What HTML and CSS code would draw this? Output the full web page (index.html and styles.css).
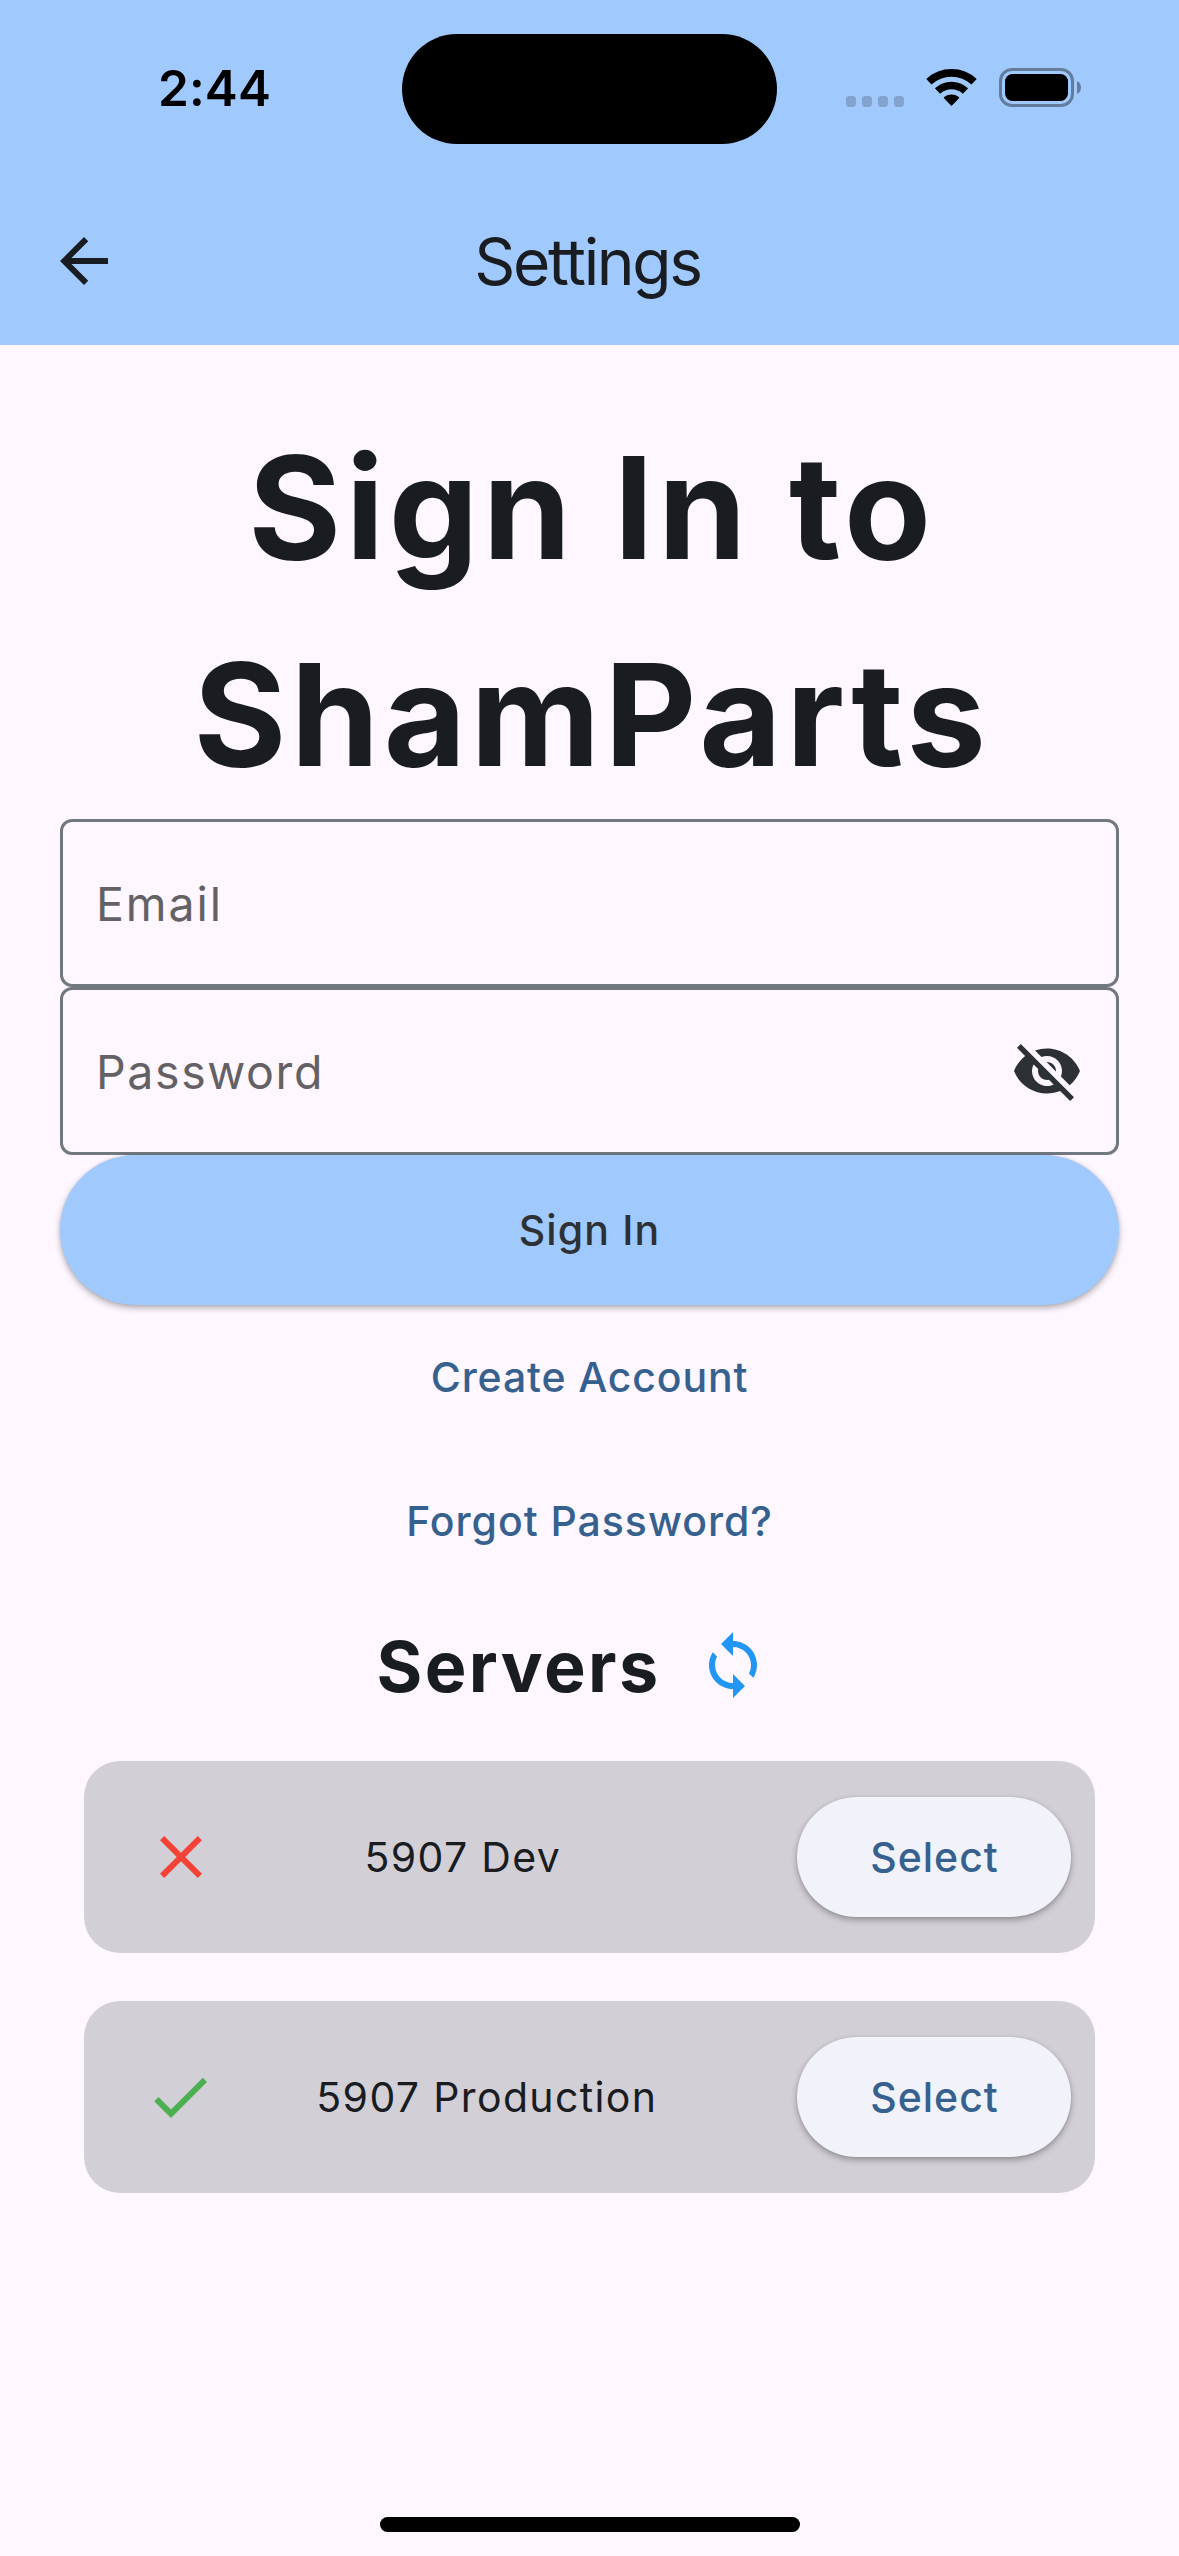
FILE: index.html
```html
<!DOCTYPE html>
<html lang="en">
<head>
  <meta charset="utf-8">
  <meta name="viewport" content="width=device-width">
  <title>Settings</title>
  <link rel="stylesheet" href="styles.css">
</head>
<body>
  <div class="screen">
    <header class="header">
      <div class="status-bar">
        <span class="time">2:44</span>
        <div class="island"></div>
        <div class="status-icons">
          <div class="signal"><i></i><i></i><i></i><i></i></div>
          <svg class="wifi" viewBox="0 0 52 38" aria-hidden="true">
            <path d="M2.9 12.8A33.1 33.1 0 0 1 48.1 12.8M11.5 22A20.5 20.5 0 0 1 39.5 22" fill="none" stroke="#000" stroke-width="7.6"/>
            <path d="M18 29.2Q17.4 28.5 18.2 27.9A12 12 0 0 1 32.8 27.9Q33.6 28.5 33 29.2L25.5 37Z"/>
          </svg>
          <svg class="battery" viewBox="0 0 82 39" aria-hidden="true">
            <rect x="1.5" y="1.5" width="72" height="36" rx="11.5" fill="none" stroke="#647c9c" stroke-width="3"/>
            <rect x="6" y="6" width="63" height="27" rx="7.5"/>
            <path d="M78 13Q82 15 82 19.5T78 26Z" fill="#647c9c"/>
          </svg>
        </div>
      </div>
      <div class="app-bar">
        <svg class="icon" viewBox="0 0 24 24" aria-label="Back"><path d="M20 11H7.83l5.59-5.59L12 4l-8 8 8 8 1.41-1.41L7.83 13H20v-2z"/></svg>
        <h1 class="title">Settings</h1>
      </div>
    </header>

    <main class="content">
      <h2 class="headline">Sign In to<br>ShamParts</h2>
      <div class="field"><span class="label-email">Email</span></div>
      <div class="field">
        <span>Password</span>
        <svg class="icon" viewBox="0 0 24 24" aria-label="Show password"><path d="M12 7c2.76 0 5 2.24 5 5 0 .65-.13 1.26-.36 1.83l2.92 2.92c1.51-1.26 2.7-2.89 3.43-4.75-1.73-4.39-6-7.5-11-7.5-1.4 0-2.74.25-3.98.7l2.16 2.16C10.74 7.13 11.35 7 12 7zM2 4.27l2.28 2.28.46.46C3.08 8.3 1.78 10.02 1 12c1.73 4.39 6 7.5 11 7.5 1.55 0 3.03-.3 4.38-.84l.42.42L19.73 22 21 20.73 3.27 3 2 4.27zM7.53 9.8l1.55 1.55c-.05.21-.08.43-.08.65 0 1.66 1.34 3 3 3 .22 0 .44-.03.65-.08l1.55 1.55c-.67.33-1.41.53-2.2.53-2.76 0-5-2.24-5-5 0-.79.2-1.53.53-2.2zm4.31-.78l3.15 3.15.02-.16c0-1.66-1.34-3-3-3l-.17.01z"/></svg>
      </div>
      <button class="button sign-in">Sign In</button>
      <a class="link">Create Account</a>
      <a class="link forgot">Forgot Password?</a>

      <div class="servers-heading">
        <h3>Servers</h3>
        <svg class="icon sync" viewBox="0 0 24 24" aria-label="Refresh"><path d="M12 4V1L8 5l4 4V6c3.31 0 6 2.69 6 6 0 1.01-.25 1.97-.7 2.8l1.46 1.46C19.54 15.03 20 13.57 20 12c0-4.42-3.58-8-8-8zm0 14c-3.31 0-6-2.69-6-6 0-1.01.25-1.97.7-2.8L5.24 7.74C4.46 8.97 4 10.43 4 12c0 4.42 3.58 8 8 8v3l4-4-4-4v3z"/></svg>
      </div>

      <div class="servers">
        <div class="server">
          <svg class="icon offline" viewBox="0 0 24 24" aria-label="Offline"><path d="M19 6.41L17.59 5 12 10.59 6.41 5 5 6.41 10.59 12 5 17.59 6.41 19 12 13.41 17.59 19 19 17.59 13.41 12z"/></svg>
          <div class="server-name"><span>5907 Dev</span></div>
          <button class="button select">Select</button>
        </div>
        <div class="server">
          <svg class="icon online" viewBox="0 0 24 24" aria-label="Online"><path d="M9 16.17L4.83 12l-1.42 1.41L9 19 21 7l-1.41-1.41z"/></svg>
          <div class="server-name"><span>5907 Production</span></div>
          <button class="button select">Select</button>
        </div>
      </div>
    </main>

    <footer class="home"><div class="home-indicator"></div></footer>
  </div>
</body>
</html>
```
FILE: styles.css
```css
* {
  box-sizing: border-box;
}

body {
  margin: 0;
  background: #fef7ff;
  color: #191c20;
  font-family: Inter, "Liberation Sans", sans-serif;
}

h1, h2, h3 {
  margin: 0;
}

.screen {
  display: flex;
  flex-direction: column;
  width: 1179px;
  height: 2556px;
}

.icon {
  flex: none;
  width: 72px;
  height: 72px;
  fill: currentColor;
}

/* Header */
.header {
  height: 345px;
  background: #a0c9fd;
}

.status-bar {
  display: grid;
  grid-template-columns: 402px 375px 1fr;
  align-items: center;
  height: 177px;
  padding: 34px 0 33px;
}

.time {
  padding: 0 0 3px 158px;
  color: #000;
  font-size: 49.5px;
  font-weight: 600;
  letter-spacing: 0.1px;
}

.island {
  height: 110px;
  border-radius: 55px;
  background: #000;
}

.status-icons {
  display: flex;
  align-items: center;
  padding: 0 0 3px 69px;
}

.signal {
  display: flex;
  gap: 6px;
  margin: 27px 22px 0 0;
}

.signal i {
  width: 10px;
  height: 11px;
  border-radius: 3.5px;
  background: #82a3cd;
}

.wifi {
  width: 52px;
  height: 38px;
  margin-right: 21px;
}

.battery {
  width: 82px;
  height: 39px;
}

.app-bar {
  display: grid;
  grid-template-columns: 72px 1fr 72px;
  align-items: center;
  height: 168px;
  padding: 0 48px;
}

.title {
  padding-right: 4px;
  font-size: 64px;
  font-weight: 400;
  letter-spacing: -2.3px;
  text-align: center;
}

/* Sign-in form */
.content {
  display: flex;
  flex: 1;
  flex-direction: column;
  padding: 59px 60px 0;
}

.headline {
  height: 415px;
  padding-left: 5px;
  font-size: 142px;
  font-weight: 700;
  line-height: 207px;
  letter-spacing: 4.45px;
  text-align: center;
}

.field {
  display: flex;
  align-items: center;
  justify-content: space-between;
  height: 168px;
  padding: 0 33px;
  border: 3px solid #72787f;
  border-radius: 12px;
  color: #636164;
  font-size: 46.5px;
  letter-spacing: 1.6px;
}

.field span {
  padding-top: 2px;
}

.field .label-email {
  letter-spacing: 1.9px;
}

.field .icon {
  color: #2d3135;
}

.button {
  padding: 0;
  border: 0;
  border-radius: 75px;
  font: 500 41px Inter, "Liberation Sans", sans-serif;
  letter-spacing: 0.95px;
  box-shadow: 0 3px 6px rgba(0, 0, 0, 0.3), 0 0 3px rgba(0, 0, 0, 0.08);
}

.sign-in {
  height: 150px;
  background: #a0c9fd;
  color: #2d3135;
  letter-spacing: 1.14px;
}

.link {
  display: flex;
  align-items: center;
  justify-content: center;
  height: 144px;
  color: #36618e;
  font-size: 41px;
  font-weight: 500;
  letter-spacing: 0.85px;
}

.forgot {
  letter-spacing: 0.96px;
}

/* Server list */
.servers-heading {
  display: flex;
  align-items: center;
  justify-content: center;
  height: 144px;
}

.servers-heading h3 {
  padding: 3px 0 0 2px;
  font-size: 70px;
  font-weight: 700;
  letter-spacing: 2.4px;
}

.sync {
  margin: 0 36px;
  color: #2196f3;
}

.servers {
  display: flex;
  flex-direction: column;
  gap: 48px;
  padding: 24px 24px 0;
}

.server {
  display: flex;
  align-items: center;
  height: 192px;
  padding: 0 24px 0 61px;
  border-radius: 36px;
  background: #d3cfd6;
}

.offline {
  color: #f44336;
}

.online {
  margin: 0 1px 0 -1px;
  color: #4caf50;
}

.server-name {
  display: flex;
  flex: 1;
  padding: 0 45px 0 52px;
  font-size: 41px;
  letter-spacing: 1.36px;
}

.server-name::before {
  flex: 1;
  content: "";
}

.server-name::after {
  flex: 2;
  content: "";
}

.select {
  width: 274px;
  height: 120px;
  padding-left: 1px;
  background: #f1f2fa;
  color: #36618e;
}

.home {
  display: flex;
  justify-content: center;
  height: 39px;
}

.home-indicator {
  width: 420px;
  height: 15px;
  border-radius: 8px;
  background: #000;
}
```
